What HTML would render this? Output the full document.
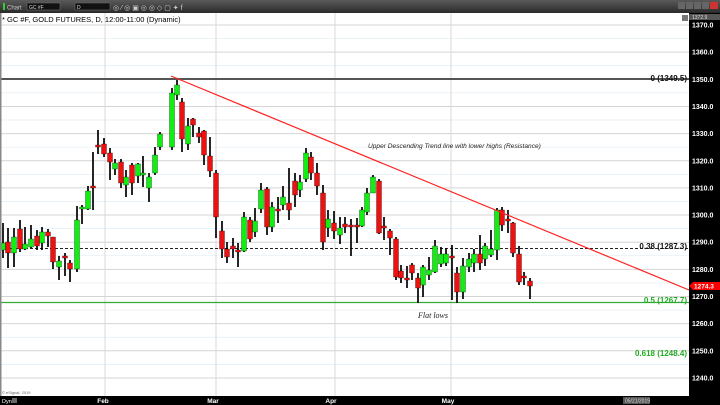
<!DOCTYPE html>
<html><head><meta charset="utf-8"><style>
html,body{margin:0;padding:0;width:720px;height:405px;overflow:hidden;background:#fff;font-family:"Liberation Sans",sans-serif}
</style></head><body>
<svg id="s" width="720" height="405" xmlns="http://www.w3.org/2000/svg" style="position:absolute;left:0;top:0">
<defs><linearGradient id="tb" x1="0" y1="0" x2="0" y2="1"><stop offset="0" stop-color="#5a5a5a"/><stop offset="1" stop-color="#2a2a2a"/></linearGradient></defs>
<rect x="0" y="0" width="720" height="13" fill="url(#tb)"/>
<rect x="3" y="3" width="2" height="7" fill="#3c3"/>
<text x="7" y="9.5" font-size="6" fill="#ccc">Chart</text>
<rect x="27" y="3" width="33" height="7" fill="#111" stroke="#777" stroke-width="0.5"/>
<text x="29" y="9" font-size="5" fill="#ddd">GC #F</text>
<rect x="75" y="3" width="35" height="7" fill="#111" stroke="#777" stroke-width="0.5"/>
<text x="77" y="9" font-size="5" fill="#ddd">D</text>
<text x="113" y="10" font-size="7" fill="#ccc">◎ ⁄ ◎ ▣ ◎ ◎ ◇ ▢ ✦ f</text>
<rect x="678" y="2" width="7" height="7" fill="#666"/><rect x="686" y="2" width="7" height="7" fill="#666"/><rect x="694" y="2" width="7" height="7" fill="#666"/><rect x="702" y="2" width="7" height="7" fill="#666"/><rect x="710" y="2" width="8" height="7" fill="#c33"/>
<rect x="0" y="13" width="689" height="383" fill="#fff"/>
<g id="grid"></g>
<rect x="0" y="78" width="689" height="2" fill="#555"/>
<line x1="0" y1="248.5" x2="689" y2="248.5" stroke="#222" stroke-width="1" stroke-dasharray="3,2"/>
<line x1="0" y1="302.5" x2="689" y2="302.5" stroke="#3a3" stroke-width="1.2"/>
<g id="c"></g>
<line x1="171" y1="76" x2="689" y2="290" stroke="#f22" stroke-width="1.2"/>
<rect x="0" y="13" width="1.5" height="383" fill="#888"/>
<text x="2" y="22" font-size="7.5" fill="#000">* GC #F, GOLD FUTURES, D, 12:00-11:00 (Dynamic)</text>
<rect x="682" y="15" width="6" height="6" fill="#777"/>
<text x="687" y="81" font-size="8" font-weight="bold" text-anchor="end" fill="#111">0 (1349.5)</text>
<text x="687" y="249" font-size="8" font-weight="bold" text-anchor="end" fill="#111">0.38 (1287.3)</text>
<text x="687" y="303" font-size="8" font-weight="bold" text-anchor="end" fill="#2a2">0.5 (1267.7)</text>
<text x="687" y="356" font-size="8" font-weight="bold" text-anchor="end" fill="#2a2">0.618 (1248.4)</text>
<text x="368" y="148" font-size="6.6" font-style="italic" fill="#222">Upper Descending Trend line with lower highs (Resistance)</text>
<text x="418" y="318" font-size="8" font-style="italic" fill="#222" font-family="Liberation Serif,serif">Flat lows</text>
<text x="2" y="394" font-size="4" fill="#666">© eSignal, 2019</text>
<rect x="689" y="13" width="31" height="392" fill="#000"/>
<rect x="0" y="396" width="720" height="9" fill="#000"/>
<g id="ax" font-size="7" fill="#fff" font-weight="bold"></g>
<rect x="689" y="14" width="31" height="6" fill="#555"/><text x="692" y="19" font-size="5" fill="#ddd">1372.9</text>
<polygon points="689,286 693,282 720,282 720,290 693,290" fill="#f00"/>
<text x="694" y="288.5" font-size="6.5" fill="#fff" font-weight="bold">1274.3</text>
<text x="2" y="403" font-size="5.5" fill="#fff">Dyn</text><rect x="12" y="398" width="5" height="5" fill="#666"/>
<text x="103" y="403" font-size="6.5" fill="#fff" font-weight="bold" text-anchor="middle">Feb</text>
<text x="213" y="403" font-size="6.5" fill="#fff" font-weight="bold" text-anchor="middle">Mar</text>
<text x="331" y="403" font-size="6.5" fill="#fff" font-weight="bold" text-anchor="middle">Apr</text>
<text x="448" y="403" font-size="6.5" fill="#fff" font-weight="bold" text-anchor="middle">May</text>
<rect x="623" y="397" width="27" height="7" fill="#555"/><text x="625" y="402.5" font-size="5" fill="#ddd">05/21/2019</text>
</svg>
<script>
var NS="http://www.w3.org/2000/svg";
function el(p,t,a){var e=document.createElementNS(NS,t);for(var k in a)e.setAttribute(k,a[k]);p.appendChild(e);return e;}
var g=document.getElementById('grid'),ax=document.getElementById('ax');
function Y(p){return 25+(1370-p)*2.715;}
for(var p=1240;p<=1370;p+=10){var y=Y(p);el(g,'line',{x1:0,y1:y,x2:689,y2:y,stroke:'#d4d4d4','stroke-width':1});
var t=el(ax,'text',{x:692,y:y+2.5});t.textContent=p+'.0';}
for(var p=1245;p<=1365;p+=10){var y=Y(p);el(g,'line',{x1:0,y1:y,x2:689,y2:y,stroke:'#e2eef5','stroke-width':0.7});}
[105,216,335,451].forEach(function(x){el(g,'line',{x1:x,y1:13,x2:x,y2:396,stroke:'#d8d8d8','stroke-width':1});});
var d=[[3,223,258,243,250,'g'],[8,228,268,242,253,'r'],[14,228,267,237,253,'g'],[20,220,252,229,249,'r'],[25,227,250,244,249,'g'],[31,225,248,239,247,'g'],[37,230,250,236,246,'r'],[42,227,250,232,243,'g'],[48,229,247,232,236,'r'],[53,237,269,237,262,'r'],[59,256,280,261,267,'g'],[65,253,276,256,258,'r'],[70,260,282,263,269,'r'],[77,206,272,220,269,'g'],[82,205,224,207,209,'g'],[88,186,210,191,209,'g'],[93,152,210,186,188,'r'],[98,130,154,145,147,'r'],[104,138,157,144,154,'r'],[110,148,180,153,162,'r'],[115,159,175,163,169,'g'],[121,159,188,162,183,'r'],[126,170,197,177,185,'g'],[132,163,195,165,183,'r'],[138,163,183,164,176,'g'],[143,156,187,173,175,'g'],[149,173,202,177,188,'g'],[155,147,175,155,173,'g'],[160,132,150,134,147,'g'],[172,88,150,93,147,'g'],[177,80,100,85,95,'g'],[182,98,152,102,139,'r'],[188,118,150,126,144,'g'],[193,118,137,119,125,'r'],[199,127,143,133,137,'r'],[204,130,165,131,155,'r'],[210,137,177,156,171,'r'],[216,170,238,173,217,'r'],[222,221,258,231,249,'r'],[227,242,263,249,257,'r'],[233,238,258,246,249,'r'],[238,243,267,250,252,'r'],[244,212,252,217,251,'g'],[250,217,242,220,239,'r'],[255,208,237,221,232,'g'],[261,183,213,190,209,'g'],[267,187,235,189,227,'r'],[272,202,232,207,227,'g'],[278,197,223,209,211,'r'],[283,186,210,197,205,'g'],[289,168,220,203,210,'r'],[295,173,207,181,195,'r'],[300,175,197,182,190,'g'],[306,148,182,153,179,'g'],[311,152,180,157,173,'r'],[317,163,195,173,186,'r'],[323,185,250,193,242,'r'],[328,210,237,219,228,'g'],[334,211,239,223,231,'r'],[340,217,244,228,235,'g'],[345,217,233,224,227,'r'],[351,219,256,225,227,'r'],[357,218,243,225,227,'r'],[362,207,227,210,226,'g'],[367,188,215,193,212,'g'],[373,175,193,177,193,'g'],[379,179,234,181,233,'r'],[384,217,240,226,228,'r'],[390,229,255,231,238,'r'],[396,237,280,239,277,'r'],[401,265,283,271,278,'r'],[407,266,288,278,280,'r'],[412,263,280,265,273,'r'],[418,273,303,278,288,'r'],[423,265,297,267,285,'g'],[429,257,280,270,275,'g'],[435,240,273,246,272,'g'],[441,247,267,254,264,'g'],[446,248,266,254,263,'g'],[452,245,300,256,258,'r'],[457,267,303,273,292,'r'],[463,258,299,266,292,'g'],[469,253,272,259,267,'g'],[474,249,272,254,263,'g'],[480,235,270,254,263,'r'],[485,243,266,246,259,'g'],[491,230,257,249,255,'g'],[497,208,260,210,250,'g'],[502,207,231,210,225,'r'],[508,210,233,219,221,'r'],[513,222,257,223,253,'r'],[519,246,285,254,282,'r'],[524,272,285,276,278,'r'],[530,278,299,281,286,'r']];
var c=document.getElementById('c');
d.forEach(function(a){el(c,'line',{x1:a[0],y1:a[1],x2:a[0],y2:a[2],stroke:'#000','stroke-width':1.7});
var h=Math.max(1.3,a[4]-a[3]);el(c,'rect',{x:a[0]-2.5,y:a[3],width:5,height:h,fill:a[5]=='g'?'#1e1':'#e11',stroke:'#000','stroke-width':0.3});});
</script>
</body></html>
